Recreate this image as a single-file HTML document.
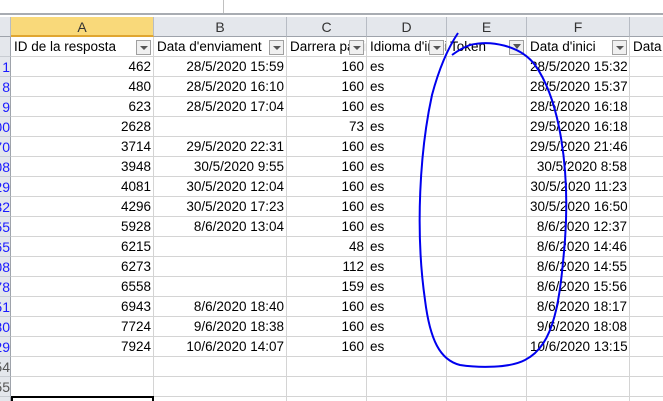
<!DOCTYPE html><html><head><style>
html,body{margin:0;width:663px;height:401px;overflow:hidden}
body{background:#fff;font-family:"Liberation Sans",sans-serif;font-size:13.5px;position:relative}
.a{position:absolute}
.hd{background:#e4e7ec;color:#333;text-align:center;line-height:20px;border-right:1px solid #b7bcc4;border-bottom:1px solid #9ea3ab;box-sizing:border-box;font-size:14px}
.c{position:absolute;height:20px;line-height:20px;box-sizing:border-box;border-right:1px solid #d4d4d4;border-bottom:1px solid #d4d4d4;white-space:nowrap;overflow:hidden;padding:0 2px 0 3px}
.r{text-align:right}
.dd{position:absolute;width:15px;height:15px;border:1px solid #a0a0a0;background:#f0f0f0;box-sizing:border-box;top:40px}
.dd:after{content:"";position:absolute;left:3px;top:5px;border-left:4px solid transparent;border-right:4px solid transparent;border-top:4px solid #555}
.ff:after{left:3px;top:3px;border-left:4px solid transparent;border-right:4px solid transparent;border-top:5px solid #555}
.rn{position:absolute;left:0;width:11px;height:20px;background:#e4e7ec;border-right:1px solid #9ea3ab;border-bottom:1px solid #c8ccd2;box-sizing:border-box;color:#1a1aff;font-size:14px;line-height:20px;text-align:right;overflow:hidden;direction:rtl}
</style></head><body>
<div class="a" style="left:0;top:0;width:223px;height:13px;border:1px solid #c0c0c0;border-top:none;border-left:none;background:#fff"></div>
<div class="a" style="left:0;top:13px;width:663px;height:2px;background:#a8acb2"></div>
<div class="a hd" style="left:0;top:17px;width:11px;height:20px"></div>
<div class="a hd" style="left:11px;top:17px;width:143px;height:20px;background:#f9d97a;border-bottom:2px solid #e0a630">A</div>
<div class="a hd" style="left:154px;top:17px;width:133px;height:20px">B</div>
<div class="a hd" style="left:287px;top:17px;width:80px;height:20px">C</div>
<div class="a hd" style="left:367px;top:17px;width:80px;height:20px">D</div>
<div class="a hd" style="left:447px;top:17px;width:80px;height:20px">E</div>
<div class="a hd" style="left:527px;top:17px;width:103px;height:20px">F</div>
<div class="a hd" style="left:630px;top:17px;width:40px;height:20px"></div>
<div id="g"></div>
<script>
var cols=[[11,143],[154,133],[287,80],[367,80],[447,80],[527,103],[630,40]];
var h=["ID de la resposta","Data d'enviament","Darrera pàgina","Idioma d'inici","Token","Data d'inici","Data"];
var rows=[["1",462,"28/5/2020 15:59",160,"28/5/2020 15:32"],["8",480,"28/5/2020 16:10",160,"28/5/2020 15:37"],["9",623,"28/5/2020 17:04",160,"28/5/2020 16:18"],["00",2628,"",73,"29/5/2020 16:18"],["70",3714,"29/5/2020 22:31",160,"29/5/2020 21:46"],["08",3948,"30/5/2020 9:55",160,"30/5/2020 8:58"],["29",4081,"30/5/2020 12:04",160,"30/5/2020 11:23"],["32",4296,"30/5/2020 17:23",160,"30/5/2020 16:50"],["55",5928,"8/6/2020 13:04",160,"8/6/2020 12:37"],["65",6215,"",48,"8/6/2020 14:46"],["08",6273,"",112,"8/6/2020 14:55"],["78",6558,"",159,"8/6/2020 15:56"],["51",6943,"8/6/2020 18:40",160,"8/6/2020 18:17"],["80",7724,"9/6/2020 18:38",160,"9/6/2020 18:08"],["29",7924,"10/6/2020 14:07",160,"10/6/2020 13:15"],["54"],["55"],[""]];
var s="";
s+='<div class="rn" style="top:37px"></div>';
cols.forEach(function(c,i){s+='<div class="c" style="left:'+c[0]+'px;top:37px;width:'+c[1]+'px">'+h[i]+'</div>';if(i<6)s+='<div class="dd'+(i==4?' ff':'')+'" style="left:'+(c[0]+c[1]-18)+'px"></div>';});
rows.forEach(function(r,k){var y=57+k*20;s+='<div class="rn" style="top:'+y+'px;'+(r.length==1?'color:#555':'')+'">'+r[0]+'</div>';
var v=r.length>1?[r[1],r[2],r[3],"es","",r[4],""]:["","","","","","",""];
cols.forEach(function(c,i){s+='<div class="c'+(i<3||i==5?' r':'')+'" style="left:'+c[0]+'px;top:'+y+'px;width:'+c[1]+'px">'+v[i]+'</div>';});});
document.getElementById('g').innerHTML=s;
</script>
<div class="a" style="left:11px;top:396px;width:143px;height:10px;border:2px solid #000;box-sizing:border-box"></div>
<svg class="a" style="left:0;top:0" width="663" height="401"><path d="M458,33 C450,45 440,65 432,95 C420,150 415,230 425,300 C430,340 440,360 460,365 C480,368 510,368 525,360 C555,345 560,300 565,240 C570,170 560,100 535,65 C520,45 490,40 470,45 C462,48 456,52 452,55" fill="none" stroke="#0000ee" stroke-width="2"/></svg>
</body></html>
